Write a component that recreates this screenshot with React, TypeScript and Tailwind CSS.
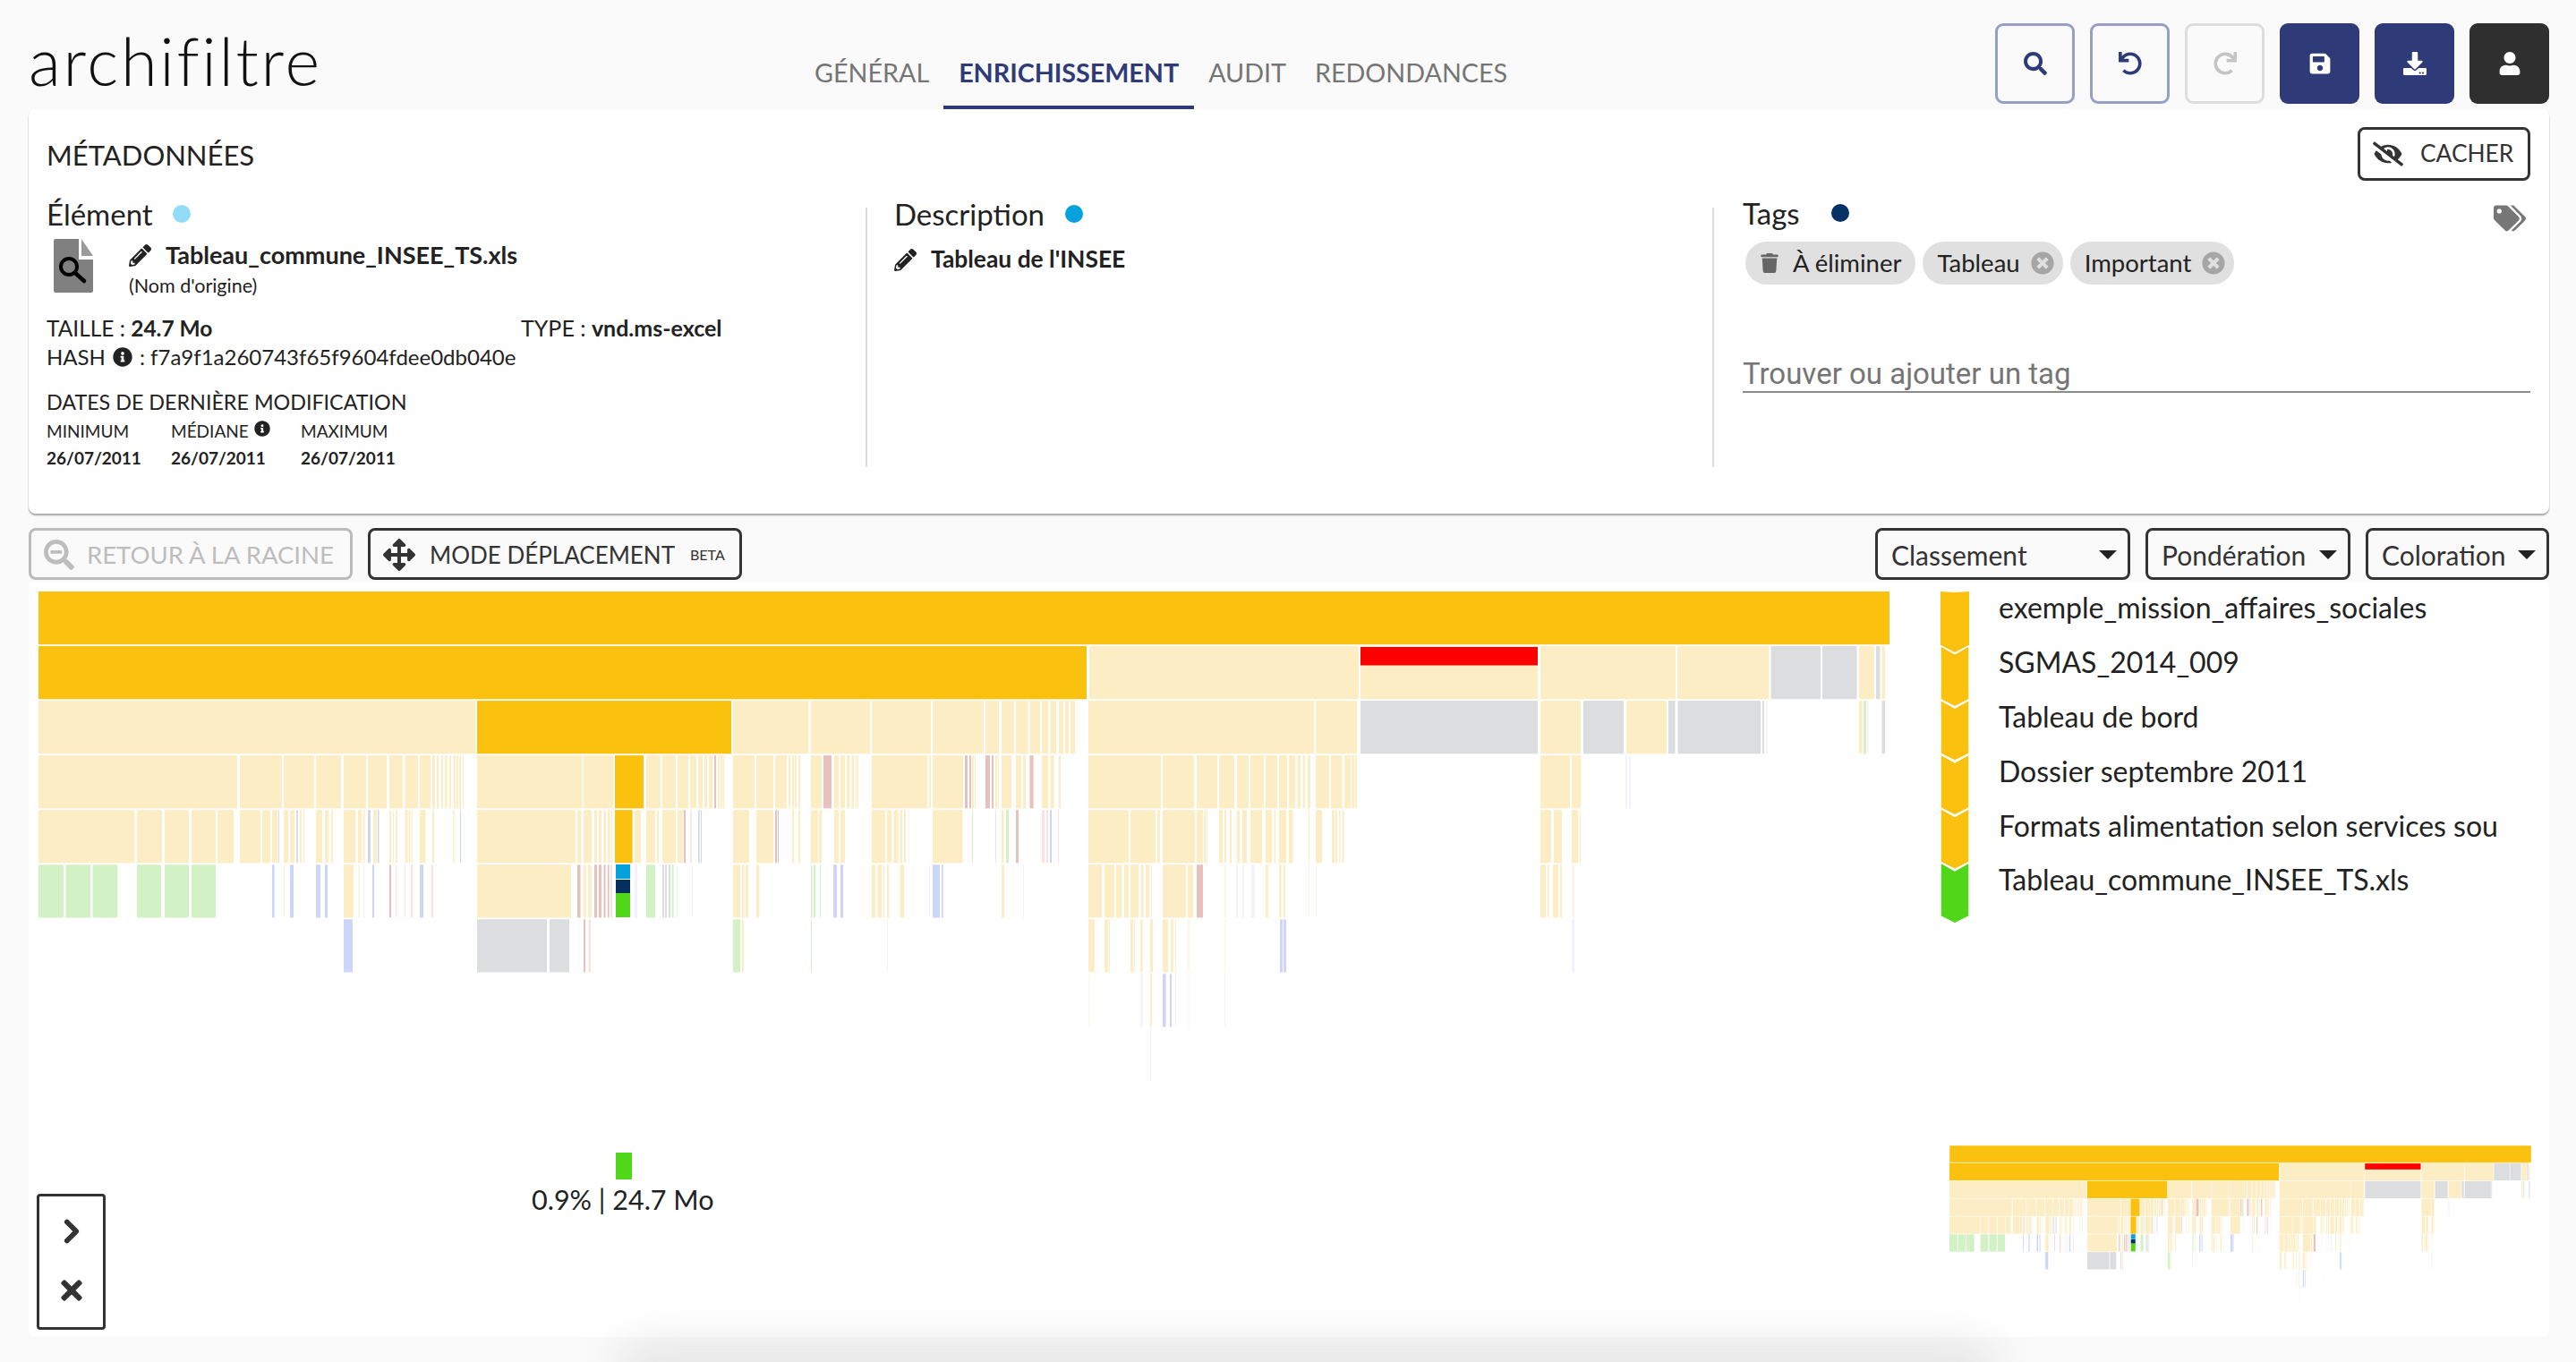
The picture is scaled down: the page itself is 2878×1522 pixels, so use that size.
import type { ReactNode } from "react";
import { ChevronRight } from "lucide-react";
import {
  FaDownload,
  FaEyeSlash,
  FaInfoCircle,
  FaArrowsAlt,
  FaPencilAlt,
  FaRedo,
  FaSave,
  FaSearch,
  FaSearchMinus,
  FaTags,
  FaTimes,
  FaTimesCircle,
  FaTrash,
  FaUndo,
  FaUser,
} from "react-icons/fa";

const COLORS = {
  Y: "#fbc10f",
  L: "#fdedc5",
  G: "#dcddde",
  E: "#d2f2c6",
  B: "#cbd6f8",
  P: "#e8c1bd",
  Q: "#f9e2df",
  F: "#f1f2fb",
  C: "#fdf6e3",
} as const;

type Key = keyof typeof COLORS;
type Row = Partial<Record<Key, number[]>>;

// x0, x1 pairs in page pixels, one entry per depth of the icicle
const ROWS: Row[] = [
  { Y: [43, 2111] },
  {
    Y: [43, 1214],
    L: [1217, 1518, 1520, 1718, 1721, 1872, 1874, 1976.5, 2077, 2094, 2102.5, 2106],
    G: [1978.5, 2034, 2036, 2074.5, 2096, 2100.5],
  },
  {
    L: [43, 531, 819, 903.5, 906, 972, 974, 1040, 1042, 1099, 1101, 1116, 1119, 1133, 1135, 1148.5, 1150.5, 1162, 1164, 1171, 1173.5, 1180, 1183, 1188, 1190, 1194, 1196, 1201, 1216, 1468, 1470, 1516, 1721, 1766, 1817, 1862, 2077, 2080.6],
    Y: [533, 817],
    G: [1520, 1718, 1769, 1814, 1864, 1871.5, 1874.5, 1967, 1969, 1971, 2102.5, 2106],
    E: [2082, 2085],
    F: [1973, 1974.5, 2086, 2087.5],
  },
  {
    L: [43, 265, 268, 315, 317, 351, 353, 381, 384, 409, 411, 432, 435, 450, 452.5, 467, 469, 481, 483, 486, 488, 490, 493, 495, 497, 499.5, 502, 504, 507, 509, 510, 512, 513, 515, 517, 518, 533, 650.5, 652, 685, 722, 738, 740, 755, 757, 769, 771, 778, 780, 785, 787, 790, 792, 796, 802, 804, 805, 807, 807.5, 809, 819, 843, 845, 864, 866, 879, 881, 883, 885, 887, 888, 890, 892, 894, 906, 918, 932, 937, 939, 944, 946, 949.5, 951.5, 954, 955.6, 957, 957.6, 959, 974, 1036, 1038, 1040, 1042, 1076, 1086, 1088, 1089, 1090, 1112, 1114, 1115, 1116, 1119, 1130, 1135, 1141, 1143, 1146, 1164, 1171, 1173.5, 1177.5, 1183, 1185, 1216, 1297, 1299, 1334, 1337, 1360, 1362, 1379, 1382, 1395, 1397, 1412, 1414, 1427, 1429, 1438, 1440, 1447, 1449.5, 1453, 1455.6, 1458, 1461, 1464, 1470, 1485, 1487, 1499.5, 1502, 1509, 1510, 1513, 1514, 1516, 1721, 1754, 1756, 1766],
    Y: [687, 719],
    P: [798, 800, 920, 929, 1078, 1081, 1083, 1085, 1101, 1106, 1108, 1110, 1150.5, 1154.6],
    F: [1816, 1818, 1820, 1822],
  },
  {
    L: [43, 150.5, 153, 181, 184, 211, 214, 241, 243, 261, 268, 291, 293, 302, 304, 310, 317, 322, 324, 329, 335, 337, 339, 340, 353, 360, 363, 367, 370, 372, 384, 397.5, 400, 404, 405.6, 407.6, 417, 421, 435, 437, 439, 440, 442, 444, 452.5, 455.6, 456.6, 458.6, 460, 461, 469, 475.5, 483, 485, 506, 507.6, 533, 643, 645, 649.5, 652, 661, 664, 667, 669, 672, 674.5, 677, 679, 681.6, 683, 684, 709, 716, 722, 732, 734, 736, 740, 755, 757, 763, 819, 837, 845, 864, 885, 887, 892, 894, 906, 914, 915, 918, 932, 937, 939, 944, 974, 989, 991, 996, 998.5, 1003.6, 1005.6, 1008, 1010, 1012, 1042, 1075.5, 1119, 1121.5, 1216, 1261, 1263, 1291, 1293, 1296, 1299, 1335, 1337, 1344, 1345, 1347, 1348, 1349, 1362, 1366, 1368, 1370, 1374, 1376, 1382, 1385, 1388, 1393, 1397, 1410, 1414, 1421, 1423.5, 1425, 1429, 1437, 1440, 1444.5, 1462, 1463, 1470, 1477, 1488, 1491, 1492, 1494, 1496, 1497.5, 1499.5, 1501.5, 1721, 1733, 1736, 1745, 1756, 1763, 1765, 1766],
    Y: [687, 706.6],
    G: [331, 333, 311, 312],
    B: [411, 414, 422, 423.5, 514, 515, 780, 781.6, 783, 784, 1173, 1175],
    P: [764, 766, 866, 868, 869, 870, 1135, 1138],
    Q: [771.4, 773, 1112, 1113, 1164, 1167, 1169, 1171, 1182, 1183],
    E: [1086, 1087, 1124, 1127],
    F: [1015, 1016],
  },
  {
    E: [43, 71, 73.5, 101, 103.5, 131, 153, 180, 184, 211, 214, 241, 722, 732, 750.5, 752.5, 906, 907.6, 909, 911, 916, 917],
    B: [304, 306.6, 324, 328, 353, 358, 363, 366, 416, 418, 469, 473, 931, 935, 939, 942, 1042, 1050, 1052, 1053.6],
    L: [317, 318, 384, 395, 400.5, 401.5, 533, 638, 652, 654.6, 657, 660.7, 819, 827, 829, 831.6, 833, 836, 845, 848.5, 974, 978, 980.6, 985, 987, 988, 991, 993, 1005.6, 1010, 1119, 1122, 1216, 1231, 1234, 1245, 1247, 1253.6, 1256, 1261, 1263, 1272, 1275, 1277.6, 1280, 1284, 1286, 1287, 1299, 1325, 1327, 1333, 1414, 1417, 1429, 1431.6, 1434, 1436, 1721, 1727, 1729, 1730.6, 1735, 1741, 1743, 1745],
    P: [435, 437, 645, 648.5, 664, 667, 669, 672, 674.5, 676.5, 679, 680.6, 1337, 1344],
    Q: [442, 443, 452, 453, 458.7, 461, 482, 484, 682, 684],
    G: [740, 742, 743, 745, 747, 749],
    F: [406, 407, 709, 712, 756, 757, 773, 774, 1038, 1039, 1143, 1144, 1381, 1383, 1388, 1390, 1398, 1401.6],
    C: [1368, 1370, 1462, 1463, 1470, 1471, 1756, 1759],
  },
  {
    B: [384, 394, 1430, 1433, 1434, 1437],
    G: [533, 611, 614, 636],
    P: [652, 654],
    Q: [657.6, 660],
    E: [819, 827, 906, 907],
    L: [829, 831, 1216, 1223, 1234, 1238, 1239, 1240, 1263, 1266, 1267, 1268, 1274, 1276.6, 1285, 1288, 1299, 1305, 1308, 1310.7, 1313, 1314, 1327.5, 1328.5],
    F: [991, 992, 1756, 1759],
    C: [1368, 1369],
  },
  {
    C: [1216, 1217],
    F: [1274, 1276.6, 1313, 1314, 1327.5, 1328.5, 1368, 1369],
    L: [1285, 1287],
    B: [1299, 1302.6, 1307, 1309],
  },
  { F: [1285, 1286] },
];

const BREADCRUMBS = [
  "exemple_mission_affaires_sociales",
  "SGMAS_2014_009",
  "Tableau de bord",
  "Dossier septembre 2011",
  "Formats alimentation selon services sou",
  "Tableau_commune_INSEE_TS.xls",
];

function Icicle({ className, focus = false }: { className: string; focus?: boolean }) {
  return (
    <svg className={className} viewBox="43 661 2068 547" preserveAspectRatio="none">
      {ROWS.map((row, depth) => {
        const y = 661 + depth * 61.05;
        return (Object.keys(row) as Key[]).map((key) => {
          const xs = row[key] ?? [];
          return xs.map((x, i) =>
            i % 2 === 0 ? (
              <rect key={`${depth}-${key}-${i}`} x={x} y={y} width={xs[i + 1] - x} height={59.2} fill={COLORS[key]} />
            ) : null,
          );
        });
      })}
      <rect x={1520} y={723} width={198} height={20.5} fill="#ff0000" />
      <rect x={688} y={966} width={16} height={16} fill="#05a1dc" />
      <rect x={688} y={983} width={16} height={15} fill="#062f60" />
      <rect x={688} y={998} width={16} height={27} fill="#52d61a" />
      {focus ? null : <rect x={43} y={661} width={2068} height={59} fill="none" stroke="#fdeab0" strokeWidth={2} />}
    </svg>
  );
}

function Crumbs() {
  return (
    <svg className="w-[32px] h-[372px] shrink-0" viewBox="0 0 32 372">
      {BREADCRUMBS.map((_, i) => {
        const top = i * 60.6;
        const bottom = top + 61;
        const notch = i === 0 ? top : top + 8;
        return (
          <polygon
            key={i}
            points={`0,${top} 16,${notch + 1} 32,${top} 32,${bottom - 1} 16,${bottom + 7} 0,${bottom - 1}`}
            fill={i === 5 ? "#52d61a" : "#fbc10f"}
            stroke="#ffffff"
            strokeWidth={i === 0 ? 0 : 1.5}
          />
        );
      })}
    </svg>
  );
}

function Dot({ color }: { color: string }) {
  return <span className={`inline-block w-[20px] h-[20px] rounded-full ${color}`} />;
}

function Title({ children, dot, gap }: { children: ReactNode; dot: string; gap: string }) {
  return (
    <div className={`flex items-center h-[32px] text-[33px] leading-[32px] ${gap}`}>
      <span>{children}</span>
      <Dot color={dot} />
    </div>
  );
}

function TopButton({ className, children }: { className: string; children: ReactNode }) {
  return (
    <button className={`flex items-center justify-center w-[89px] h-[90px] rounded-[9px] text-[26px] ${className}`}>
      {children}
    </button>
  );
}

function Select({ label, width }: { label: string; width: string }) {
  return (
    <button
      className={`flex items-center justify-between h-[58px] pl-[15px] pr-[12px] pt-[2px] border-[3px] border-[#333333] rounded-[8px] text-[30px] text-[#333333] ${width}`}
    >
      {label}
      <span className="w-0 h-0 border-x-[10px] border-x-transparent border-t-[10px] border-t-[#222222]" />
    </button>
  );
}

function Chip({ children }: { children: ReactNode }) {
  return (
    <span className="flex items-center h-[48px] pl-[16px] pr-[10px] rounded-full bg-[#e0e0e0] text-[27.5px] text-[#222222]">
      {children}
    </span>
  );
}

function FileIcon() {
  return (
    <svg className="w-[44px] h-[60px] ml-[8px] shrink-0" viewBox="0 0 44 60">
      <path d="M2 0H28V23H44V58a2 2 0 0 1-2 2H2a2 2 0 0 1-2-2V2a2 2 0 0 1 2-2Z" fill="#808080" />
      <path d="M31 0 44 19H31Z" fill="#9a9a9a" />
      <circle cx="17" cy="31" r="9" fill="none" stroke="#000000" strokeWidth="4" />
      <path d="M24 38 34 47" stroke="#000000" strokeWidth="4.5" strokeLinecap="round" />
    </svg>
  );
}

export default function App() {
  return (
    <div
      className="relative w-[2878px] h-[1522px] overflow-hidden flex flex-col pl-[32px] pr-[30px] bg-[#fafafa] text-[#222222]"
      style={{ fontFamily: "Lato, 'Noto Sans', sans-serif" }}
    >
      <header className="flex h-[122px] shrink-0">
        <div className="w-[862px] shrink-0 pt-[24px] text-[74px] leading-[88px] font-light tracking-[2.7px] text-[#111111]">
          archifiltre
        </div>
        <nav className="flex items-end text-[28.7px] text-[#757575]">
          <span className="flex items-center h-[64px] px-[16px] pb-[16px]">GÉNÉRAL</span>
          <span className="flex items-center h-[64px] px-[17px] pb-[12px] border-b-[4px] border-[#2e3b78] font-bold text-[#2e3b78]">
            ENRICHISSEMENT
          </span>
          <span className="flex items-center h-[64px] px-[16px] pb-[16px]">AUDIT</span>
          <span className="flex items-center h-[64px] px-[16px] pb-[16px]">REDONDANCES</span>
        </nav>
        <div className="ml-auto flex gap-[17px] pt-[26px]">
          <TopButton className="border-[3px] border-[#97a0c4] text-[#2e3b78]">
            <FaSearch />
          </TopButton>
          <TopButton className="border-[3px] border-[#97a0c4] text-[#2e3b78]">
            <FaUndo />
          </TopButton>
          <TopButton className="border-[3px] border-[#dddddd] text-[#c4c4c4]">
            <FaRedo />
          </TopButton>
          <TopButton className="bg-[#2e3b78] text-white">
            <FaSave />
          </TopButton>
          <TopButton className="bg-[#2e3b78] text-white">
            <FaDownload />
          </TopButton>
          <TopButton className="bg-[#2f2f2f] text-white">
            <FaUser />
          </TopButton>
        </div>
      </header>

      <section className="h-[452px] shrink-0 rounded-[8px] bg-white pt-[20px] pl-[20px] pr-[21px] shadow-[0_2px_2px_rgba(0,0,0,0.35)]">
        <div className="flex items-start justify-between h-[92px]">
          <h2 className="pt-[13px] text-[31px] leading-[36px] font-normal">MÉTADONNÉES</h2>
          <button className="flex items-center gap-[19px] w-[193px] h-[60px] pl-[14px] border-[3px] border-[#333333] rounded-[8px] text-[26.3px] text-[#333333]">
            <FaEyeSlash className="text-[34px] shrink-0" />
            CACHER
          </button>
        </div>
        <div className="flex h-[288px]">
          <div className="w-[917px] shrink-0 border-r-[2px] border-[#dddddd] -mt-[2px]">
            <div className="-mt-[9px]">
              <Title dot="bg-[#93dcf7]" gap="gap-[22px]">Élément</Title>
            </div>
            <div className="flex mt-[12px] h-[72px]">
              <FileIcon />
              <div className="ml-[40px]">
                <div className="flex items-center gap-[16px] h-[36px] text-[27px] font-bold">
                  <FaPencilAlt className="text-[25px] text-[#222222]" />
                  Tableau_commune_INSEE_TS.xls
                </div>
                <div className="mt-[3px] text-[21.5px] leading-[26px]">(Nom d'origine)</div>
              </div>
            </div>
            <div className="flex mt-[12px] h-[32px] items-center text-[24.5px]">
              <span className="w-[530px]">
                TAILLE : <b>24.7 Mo</b>
              </span>
              <span className="text-[25px]">
                TYPE : <b>vnd.ms-excel</b>
              </span>
            </div>
            <div className="flex h-[32px] items-center gap-[8px] text-[24px]">
              HASH <FaInfoCircle className="text-[22px]" /> : f7a9f1a260743f65f9604fdee0db040e
            </div>
            <div className="mt-[18px] h-[32px] text-[23.3px] leading-[32px]">DATES DE DERNIÈRE MODIFICATION</div>
            <div className="flex mt-[2px] text-[19px] leading-[30px]">
              <div className="w-[139px]">
                <div>MINIMUM</div>
                <b>26/07/2011</b>
              </div>
              <div className="w-[145px]">
                <div className="flex items-center gap-[6px]">
                  MÉDIANE <FaInfoCircle className="text-[18px] -mt-[6px]" />
                </div>
                <b>26/07/2011</b>
              </div>
              <div>
                <div>MAXIMUM</div>
                <b>26/07/2011</b>
              </div>
            </div>
          </div>
          <div className="w-[946px] shrink-0 pl-[30px] border-r-[2px] border-[#dddddd] -mt-[2px]">
            <div className="-mt-[9px]">
              <Title dot="bg-[#05a1dc]" gap="gap-[23px]">Description</Title>
            </div>
            <div className="flex items-center gap-[16px] mt-[17px] h-[36px] text-[26.4px] font-bold">
              <FaPencilAlt className="text-[25px] text-[#222222]" />
              Tableau de l'INSEE
            </div>
          </div>
          <div className="flex-1 pl-[32px] -mt-[12px]">
            <div className="flex items-start justify-between pr-[5px]">
              <Title dot="bg-[#063166]" gap="gap-[35px]">Tags</Title>
              <FaTags className="text-[36px] text-[#777777] mt-[4px]" />
            </div>
            <div className="flex gap-[8px] mt-[8px] ml-[3px]">
              <Chip>
                <FaTrash className="text-[22px] text-[#666666] mr-[15px]" />
                <span className="mr-[6px]">À éliminer</span>
              </Chip>
              <Chip>
                <span className="mr-[12px]">Tableau</span>
                <FaTimesCircle className="text-[26px] text-[#a6a6a6]" />
              </Chip>
              <Chip>
                <span className="mr-[12px]">Important</span>
                <FaTimesCircle className="text-[26px] text-[#a6a6a6]" />
              </Chip>
            </div>
            <div
              className="mt-[83px] h-[38px] border-b-[2px] border-[#8a8a8a] text-[33px] leading-[34px] text-[#757575]"
              style={{ fontFamily: "Roboto, sans-serif" }}
            >
              Trouver ou ajouter un tag
            </div>
          </div>
        </div>
      </section>

      <div className="flex items-start h-[76px] shrink-0 pt-[16px]">
        <button className="flex items-center gap-[14px] w-[362px] h-[58px] pl-[14px] pt-[2px] mr-[17px] border-[3px] border-[#bbbbbb] rounded-[8px] text-[27.5px] text-[#bdbdbd]">
          <FaSearchMinus className="text-[34px] shrink-0" />
          RETOUR À LA RACINE
        </button>
        <button className="flex items-center w-[418px] h-[58px] pl-[14px] pt-[2px] border-[3px] border-[#333333] rounded-[8px] text-[26px] text-[#333333]">
          <FaArrowsAlt className="text-[36px] shrink-0 mr-[16px]" />
          MODE DÉPLACEMENT
          <span className="ml-[17px] text-[16px]">BETA</span>
        </button>
        <div className="ml-auto flex gap-[17px]">
          <Select label="Classement" width="w-[285px]" />
          <Select label="Pondération" width="w-[229px]" />
          <Select label="Coloration" width="w-[205px]" />
        </div>
      </div>

      <section className="relative flex h-[844px] shrink-0 rounded-[8px] bg-white pt-[11px] pl-[11px] pr-[20px]">
        <div className="w-[2068px] shrink-0">
          <Icicle className="w-[2068px] h-[547px]" focus />
          <div className="mt-[80px] ml-[645px] w-[18px] h-[30px] bg-[#52d61a]" />
          <div className="ml-[551px] text-[30.5px] leading-[44px] text-[#222222]">0.9% | 24.7 Mo</div>
        </div>
        <div className="flex-1 flex flex-col pl-[57px]">
          <div className="flex h-[619px]">
            <Crumbs />
            <ul className="ml-[33px] -mt-[12px]">
              {BREADCRUMBS.map((name) => (
                <li key={name} className="h-[60.8px] flex items-center text-[32px] whitespace-nowrap text-[#222222]">
                  {name}
                </li>
              ))}
            </ul>
          </div>
          <Icicle className="w-[650px] h-[178px] ml-[10px]" />
        </div>
        <div className="absolute left-[9px] bottom-[8px] flex flex-col items-center w-[77px] h-[152px] border-[3px] border-[#333333] rounded-[4px] bg-white text-[#333333]">
          <ChevronRight className="w-[42px] h-[42px] mt-[18px]" strokeWidth={3.2} />
          <FaTimes className="text-[34px] mt-[28px]" />
        </div>
      </section>

      <div className="absolute left-[690px] bottom-[-32px] w-[1540px] h-[50px] rounded-full bg-[#e2e2e2] blur-[24px]" />
    </div>
  );
}
